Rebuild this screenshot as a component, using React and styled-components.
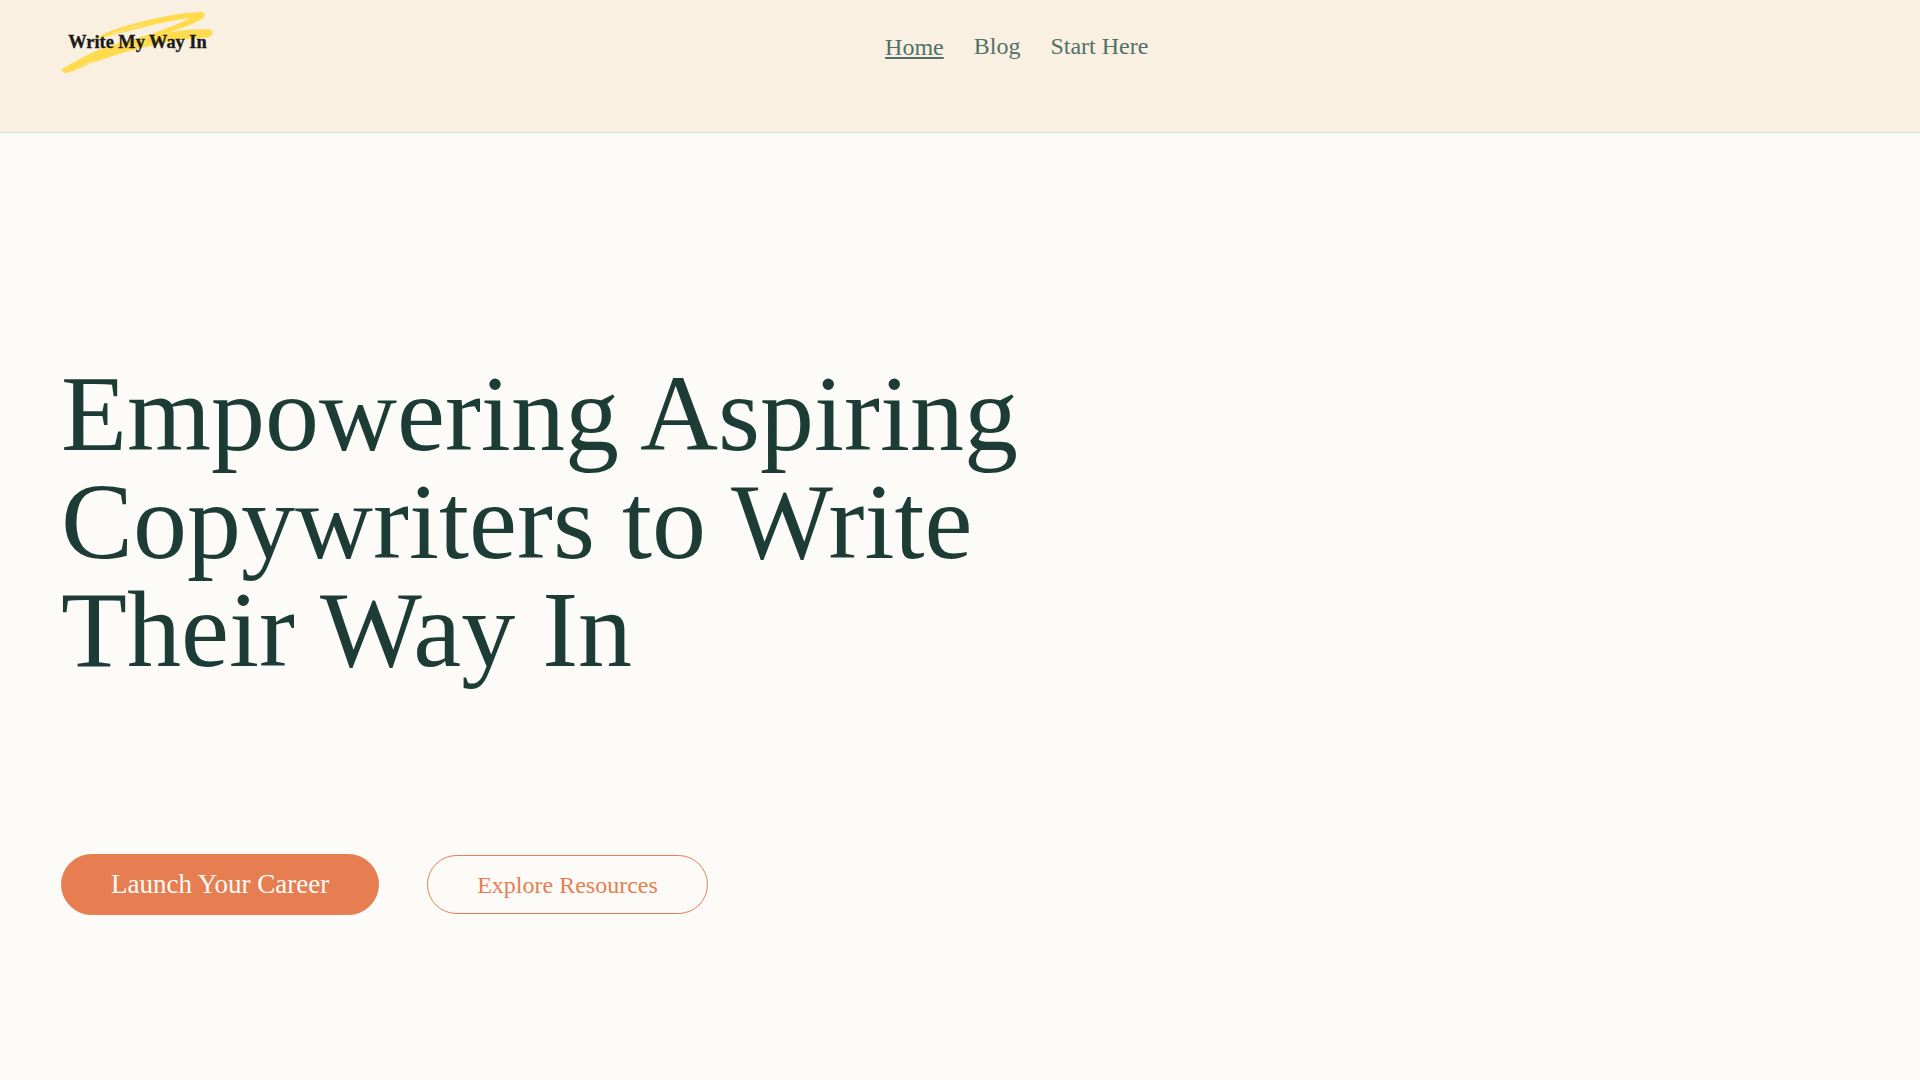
import React from 'react';
import styled, { createGlobalStyle } from 'styled-components';

const GlobalStyle = createGlobalStyle`
  * {
    box-sizing: border-box;
  }

  body {
    margin: 0;
    background: #fdfbf7;
    font-family: 'Liberation Serif', 'Times New Roman', serif;
  }
`;

const Header = styled.header`
  display: grid;
  grid-template-columns: 11fr 13fr;
  align-items: start;
  height: 133px;
  padding: 8px 61px 0;
  background: #faf0e1;
  border-bottom: 1px solid #cbe3dc;
`;

const LogoLink = styled.a`
  display: block;
  width: 156px;

  svg {
    display: block;
    width: 100%;
  }
`;

const Nav = styled.nav`
  display: flex;
  gap: 30px;
  padding-top: 24px;
`;

const NavLink = styled.a`
  color: #51706a;
  font-size: 24px;
  line-height: ${({ $active }) => ($active ? '30px' : '28px')};
  text-decoration: ${({ $active }) => ($active ? 'underline' : 'none')};
`;

const Hero = styled.main`
  padding: 227px 61px 160px;
`;

const Title = styled.h1`
  max-width: 1000px;
  margin: 0 0 170px;
  color: #1c3c35;
  font-size: 108px;
  font-weight: 400;
  line-height: 108px;
`;

const Actions = styled.div`
  display: flex;
  align-items: center;
  gap: 48px;
`;

const Button = styled.button`
  padding: ${({ $primary }) => ($primary ? '15px 49px' : '16px 49px 14px')};
  border: 1px solid #e77e52;
  border-radius: 32px;
  background: ${({ $primary }) => ($primary ? '#e77e52' : 'transparent')};
  color: ${({ $primary }) => ($primary ? '#fdfbf7' : '#e77e52')};
  font-family: inherit;
  font-size: ${({ $primary }) => ($primary ? '27px' : '24px')};
  line-height: ${({ $primary }) => ($primary ? '29px' : '27px')};
  cursor: pointer;
`;

const LogoText = styled.text`
  fill: #1a1a1a;
  stroke: #1a1a1a;
  stroke-width: 1px;
  font-family: 'Liberation Serif', 'Times New Roman', serif;
  font-size: 55px;
  font-weight: 700;
`;

const LINKS = [
  { label: 'Home', href: '#home', active: true },
  { label: 'Blog', href: '#blog' },
  { label: 'Start Here', href: '#start' },
];

function Logo() {
  return (
    <svg viewBox="33 24 468 204" aria-hidden="true">
      {/* brush stroke behind the name */}
      <path
        fill="#ffdb4d"
        d="M35 208 C70 188 108 164 160 144 C200 130 240 120 272 111 C325 96 378 76 420 54
          C370 60 300 76 240 92 C205 100 170 110 138 118 C150 102 190 88 260 69
          C330 50 400 38 452 36 C464 36 467 43 462 50 C448 68 400 80 358 98
          C400 88 440 87 476 88 C488 90 491 99 485 105 C482 112 474 114 462 113
          C400 115 320 130 250 150 C180 168 120 192 58 217 C46 221 36 219 35 208 Z"
      />
      {/* dry bristle marks */}
      <path
        fill="none"
        stroke="#faf0e1"
        strokeWidth="2"
        d="M188 100 L222 92 M200 104 L248 93 M232 86 L272 77 M96 196 L124 186 M112 194 L140 183"
      />
      <LogoText x="55" y="143">Write My Way In</LogoText>
    </svg>
  );
}

export default function App() {
  return (
    <>
      <GlobalStyle />
      <Header>
        <LogoLink href="#home" aria-label="Write My Way In">
          <Logo />
        </LogoLink>
        <Nav>
          {LINKS.map(({ label, href, active }) => (
            <NavLink key={href} href={href} $active={active}>{label}</NavLink>
          ))}
        </Nav>
      </Header>
      <Hero>
        <Title>Empowering Aspiring Copywriters to Write Their Way In</Title>
        <Actions>
          <Button $primary>Launch Your Career</Button>
          <Button>Explore Resources</Button>
        </Actions>
      </Hero>
    </>
  );
}
